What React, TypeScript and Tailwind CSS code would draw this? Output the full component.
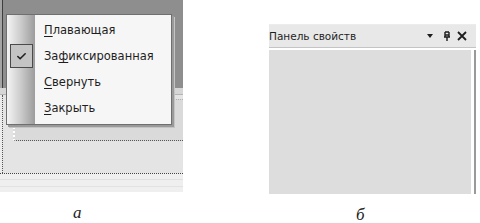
import { Check } from "lucide-react";

const menuItems = [
  { pre: "", key: "П", post: "лавающая", checked: false },
  { pre: "За", key: "ф", post: "иксированная", checked: true },
  { pre: "", key: "С", post: "вернуть", checked: false },
  { pre: "", key: "З", post: "акрыть", checked: false },
];

function DockMenu() {
  return (
    <div className="absolute left-[6px] top-[14px] w-[166px] h-[111px] bg-[#f6f6f6] border border-[#6f6f6f] shadow-[2px_2px_0_#9a9a9a,3px_3px_0_#c4c4c4] flex">
      <div className="w-[28px] h-full bg-gradient-to-r from-[#f4f4f4] via-[#cbcbcb] to-[#9c9c9c]" />
      <div className="flex-1 pt-[3px]">
        {menuItems.map((item) => (
          <div key={item.key + item.post} className="h-[26px] flex items-center relative">
            {item.checked && (
              <div className="absolute left-[-25px] top-0 w-[23px] h-[24px] bg-[#c4c4c4] border border-[#4a4a4a] flex items-center justify-center">
                <Check className="w-[11px] h-[11px] text-[#222]" strokeWidth={3.5} />
              </div>
            )}
            <span className="pl-[9px] text-[11.5px] text-[#1e1e1e] font-['DejaVu_Sans',sans-serif] leading-none">
              {item.pre}
              <span className="underline underline-offset-2">{item.key}</span>
              {item.post}
            </span>
          </div>
        ))}
      </div>
    </div>
  );
}

function LeftShot() {
  return (
    <div className="relative w-[183px] h-[195px] bg-[#ececec] flex flex-col overflow-hidden">
      <div className="h-[88px] bg-[#8e8e8e] shadow-[inset_2px_0_0_#a4a4a4,inset_3px_0_0_#3e3e3e]" />
      <div className="h-[7px] bg-[#d6d6d6] border-b border-[#b4b4b4]" />
      <div className="h-[78px] bg-[#e4e4e4] pl-[10px] pt-[4px] ml-[2px] border-l border-dotted border-[#555]">
        <div className="h-[42px] bg-[#dadada] border-t border-[#b0b0b0] border-l-2 border-l-white border-b border-b-[#555] border-dotted" />
      </div>
      <div className="flex-1 border-t border-dotted border-[#444] bg-[#efefef] flex flex-col gap-[6px] pt-[5px]">
        <div className="h-px bg-[#e0e0e0]" />
        <div className="h-px bg-[#e2e2e2]" />
      </div>
      <DockMenu />
    </div>
  );
}

function RightShot() {
  return (
    <div className="w-[207px] flex flex-col">
      <div className="h-[25px] flex items-end">
        <div className="h-px w-full bg-[#ececec]" />
      </div>
      <div className="h-[23px] bg-[#e8e8e8] border-b border-[#c4c4c4] flex items-center font-['DejaVu_Sans',sans-serif] text-[10.5px] text-[#1e1e1e]">
        <span className="flex-1 leading-none">Панель свойств</span>
        <svg width="8" height="6" viewBox="0 0 8 6" className="mr-[9px]">
          <path d="M1 1h6L4 5z" fill="#1e1e1e" />
        </svg>
        <svg width="8" height="10" viewBox="0 0 8 10" className="mr-[6px]">
          <path d="M2 1v5M6 1v5M2 1h4M2 4h4M1 6h6M4 6v4" stroke="#1e1e1e" strokeWidth="1.4" fill="none" />
        </svg>
        <svg width="10" height="10" viewBox="0 0 10 10" className="mr-[9px]">
          <path d="M1 1l8 8M9 1l-8 8" stroke="#1e1e1e" strokeWidth="1.8" />
        </svg>
      </div>
      <div className="h-[146px] flex pt-[2px]">
        <div className="flex-1 bg-[#dddddd]" />
        <div className="w-[3px] bg-white" />
        <div className="w-[2px] bg-[#9a9a9a]" />
      </div>
    </div>
  );
}

export default function App() {
  return (
    <div className="w-[480px] h-[223px] bg-white flex overflow-hidden">
      <div className="w-[183px] flex flex-col">
        <LeftShot />
        <div className="mt-[11px] pl-[73px] font-['Liberation_Serif',serif] italic text-[17px] leading-[20px] text-[#222]">
          а
        </div>
      </div>
      <div className="ml-[86px] flex flex-col">
        <RightShot />
        <div className="mt-[11px] pl-[87px] font-['Liberation_Serif',serif] italic text-[17px] leading-[20px] text-[#222]">
          б
        </div>
      </div>
    </div>
  );
}
